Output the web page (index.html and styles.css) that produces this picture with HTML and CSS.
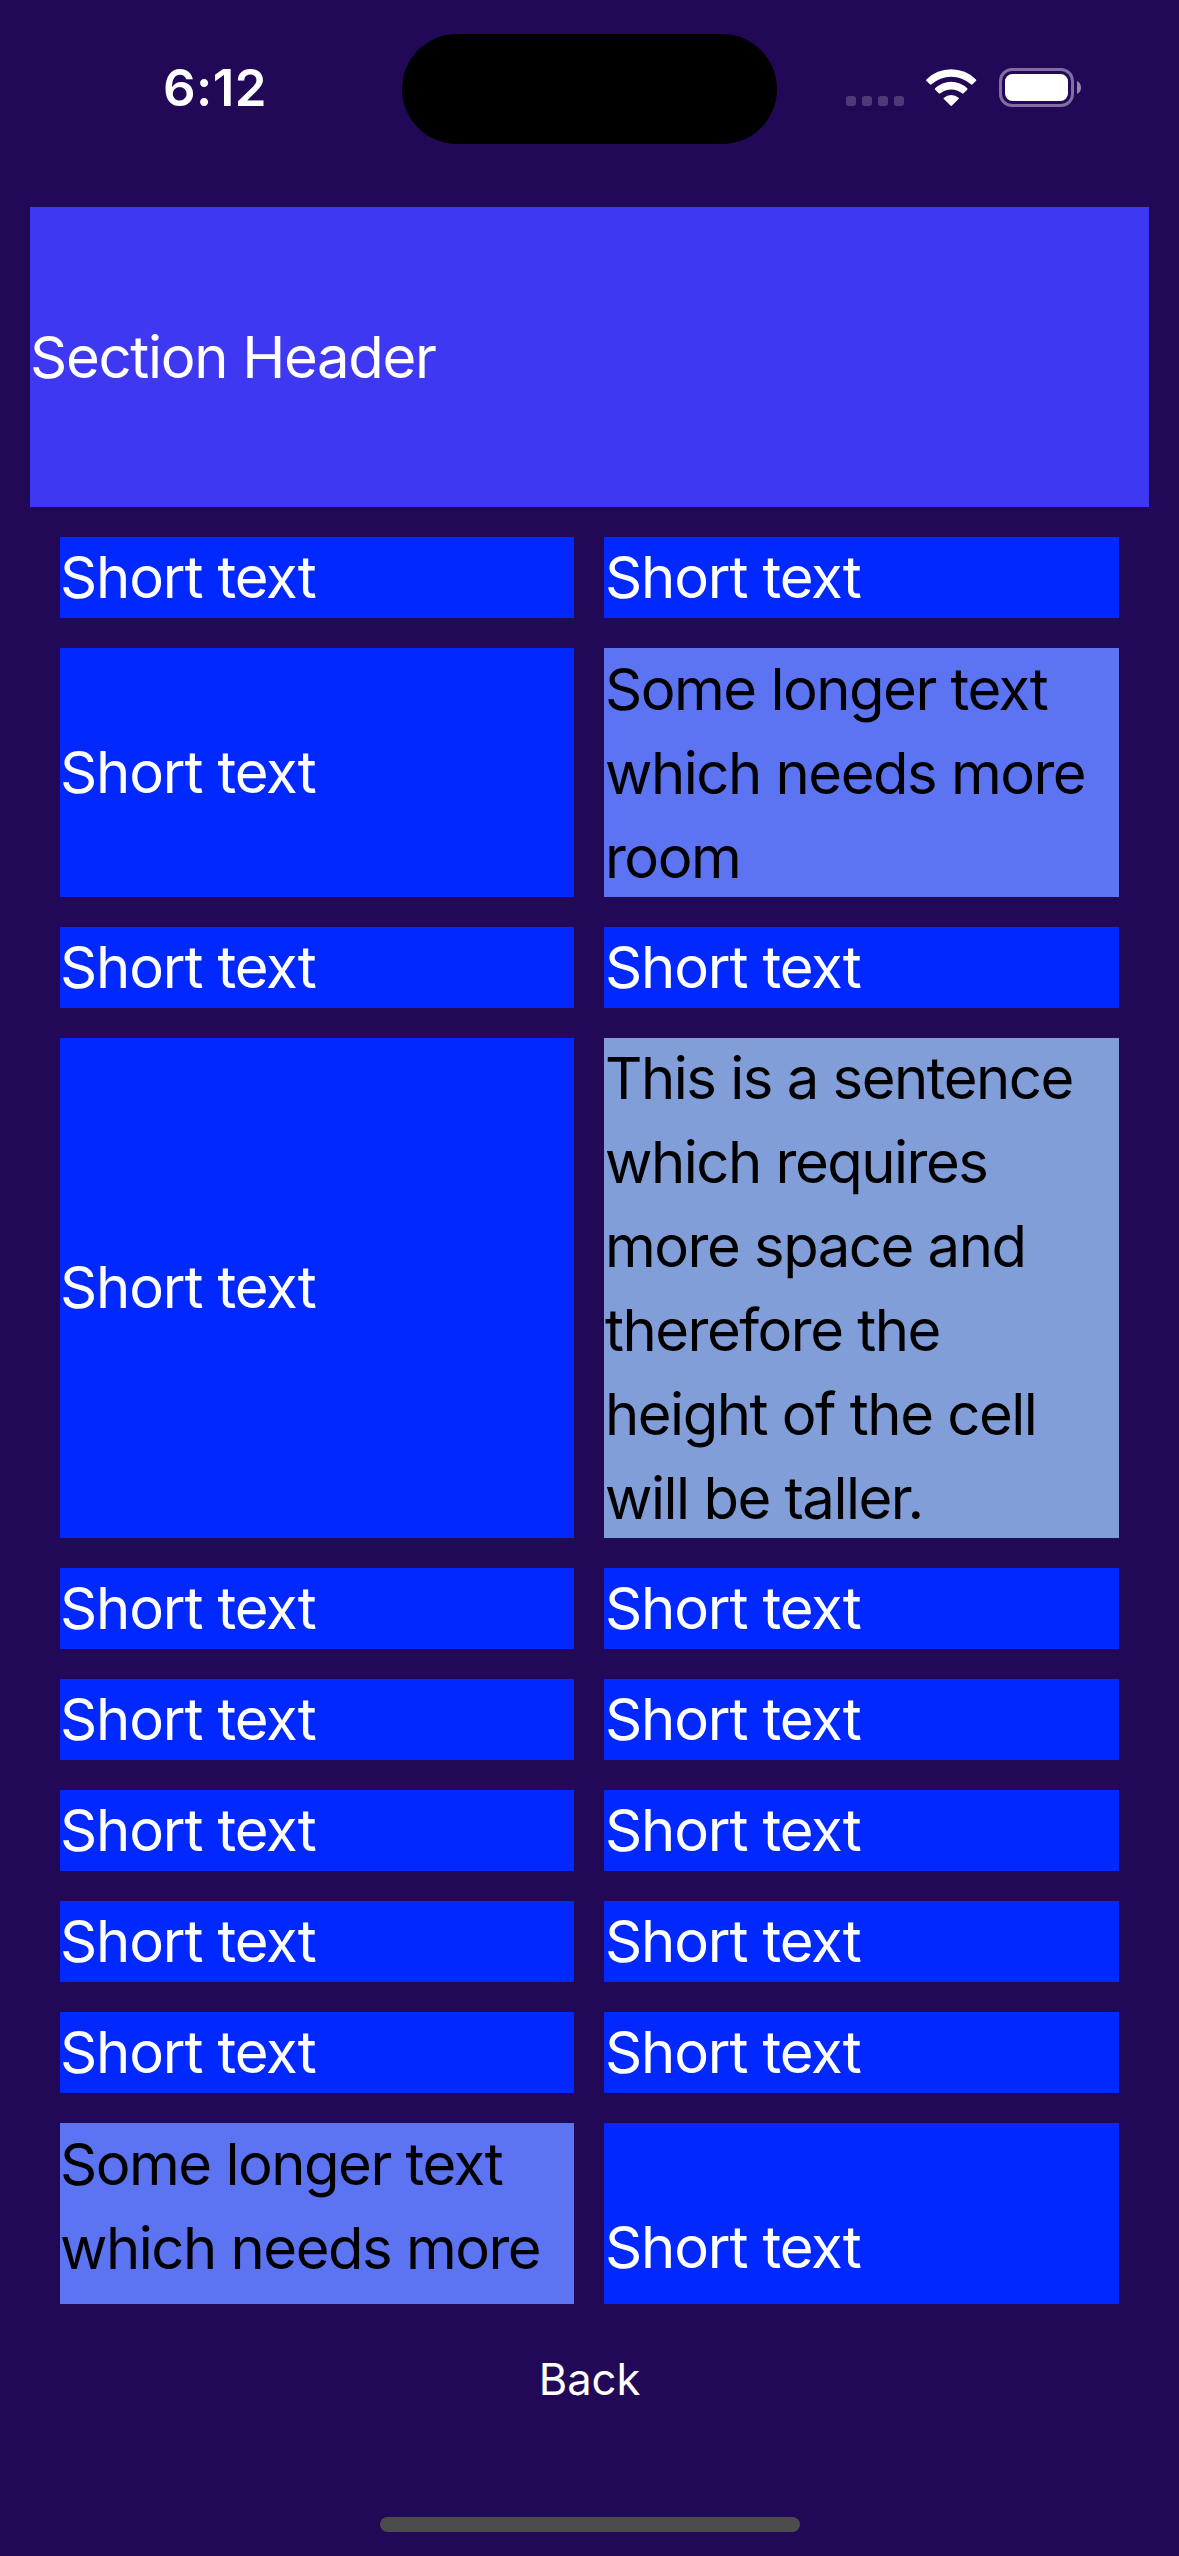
FILE: index.html
```html
<!DOCTYPE html>
<html lang="en">
<head>
<meta charset="utf-8">
<title>Grid</title>
<link rel="stylesheet" href="styles.css">
</head>
<body>
<div class="screen">
  <header class="status">
    <div class="time">6:12</div>
    <div class="island"></div>
    <div class="indicators">
      <svg class="signal" width="58" height="10" viewBox="0 0 58 10"><rect width="10" height="10" rx="3"/><rect x="16" width="10" height="10" rx="3"/><rect x="32" width="10" height="10" rx="3"/><rect x="48" width="10" height="10" rx="3"/></svg>
      <svg class="wifi" width="51" height="37" viewBox="0 0 51 37"><path d="M.5 10.4A35 35 0 0 1 49.9 10.4Q50.7 11.1 49.9 11.9L46.5 15.3Q45.7 16.1 44.9 15.3A29.2 29.2 0 0 0 5.500 15.3Q4.700 16.100 3.900 15.3L.5 11.900Q-.3 11.100 .5 10.400Z"/><path d="M9.200 19.300A22.800 22.800 0 0 1 41.200 19.300Q42 20 41.200 20.800L37.700 24.300Q36.900 25.100 36.100 24.300A17.300 17.300 0 0 0 14.300 24.300Q13.500 25.100 12.700 24.300L9.200 20.800Q8.400 20 9.200 19.300Z"/><path d="M17.900 28.700A11 11 0 0 1 32.500 28.700Q33.200 29.400 32.500 30.100L26 36.600Q25.200 37.300 24.400 36.600L17.900 30.100Q17.200 29.400 17.900 28.700Z"/></svg>
      <svg class="battery" width="82" height="39" viewBox="0 0 82 39"><rect class="battery-shell" x="1.500" y="1.500" width="72" height="36" rx="11.500"/><rect class="battery-level" x="6" y="6" width="63" height="27" rx="7.500"/><path class="battery-cap" d="M78 13Q82 15 82 19.500T78 26Z"/></svg>
    </div>
  </header>
  <main class="list">
    <h1 class="section-header">Section Header</h1>
    <div class="grid">
      <div class="cell">Short text</div><div class="cell">Short text</div>
      <div class="cell">Short text</div><div class="cell medium">Some longer text which needs more room</div>
      <div class="cell">Short text</div><div class="cell">Short text</div>
      <div class="cell">Short text</div><div class="cell long">This is a sentence which requires more space and therefore the height of the cell will be taller.</div>
      <div class="cell">Short text</div><div class="cell">Short text</div>
      <div class="cell">Short text</div><div class="cell">Short text</div>
      <div class="cell">Short text</div><div class="cell">Short text</div>
      <div class="cell">Short text</div><div class="cell">Short text</div>
      <div class="cell">Short text</div><div class="cell">Short text</div>
      <div class="cell medium partial">Some longer text which needs more</div><div class="cell">Short text</div>
    </div>
  </main>
  <footer class="footer">
    <div class="back">Back</div>
    <div class="home"></div>
  </footer>
</div>
</body>
</html>
```
FILE: styles.css
```css
* { box-sizing: border-box; }
body { margin: 0; background: #220957; }
.screen {
  width: 1179px;
  height: 2556px;
  display: flex;
  flex-direction: column;
  overflow: hidden;
  font-family: Inter, "Liberation Sans", sans-serif;
  color: #fff;
}
.status {
  height: 207px;
  padding-top: 34px;
  display: grid;
  grid-template-columns: 402px 375px 402px;
  align-items: start;
}
.time {
  padding-left: 28px;
  text-align: center;
  font-size: 51px;
  line-height: 60px;
  font-weight: 600;
  letter-spacing: 0.5px;
  margin-top: 24px;
}
.island { height: 110px; border-radius: 55px; background: #000; }
.indicators {
  display: flex;
  align-items: flex-end;
  height: 39px;
  margin: 34px 0 0 69px;
}
.indicators svg { display: block; flex: none; fill: #fff; }
.indicators .signal { margin: 0 22px 1px 0; fill: #503977; }
.wifi { margin: 0 22px 1px 0; }
.indicators .battery-shell { fill: none; stroke: #806ea0; stroke-width: 3; }
.indicators .battery-cap { fill: #9587b0; }
.list { height: 2097px; padding: 0 30px; overflow: hidden; flex: none; }
.section-header {
  height: 300px;
  margin: 0;
  padding-bottom: 1px;
  display: flex;
  align-items: center;
  background: #3e38f2;
  font-size: 58px;
  font-weight: 400;
  line-height: 84px;
  letter-spacing: -1.3px;
}
.grid {
  padding: 30px;
  display: grid;
  grid-template-columns: 514px 515px;
  grid-template-rows: 81px 249px 81px 500px repeat(5, 81px) 249px;
  gap: 30px;
}
.cell {
  padding-bottom: 2px;
  display: flex;
  align-items: center;
  background: #0028ff;
  font-size: 58px;
  line-height: 84px;
  letter-spacing: -1.15px;
}
.cell:nth-child(even) { padding-left: 1px; }
.medium, .long { padding-right: 12px; padding-bottom: 0; color: #000; letter-spacing: -1.5px; }
.medium { background: #5c73f2; }
.long { padding-bottom: 1px; background: #829ed9; }
.partial { padding-bottom: 84px; }
.footer {
  flex: 1;
  padding: 45px 0 24px;
  display: flex;
  flex-direction: column;
  align-items: center;
  justify-content: space-between;
}
.back { font-size: 43.5px; line-height: 60px; }
.home { width: 420px; height: 15px; border-radius: 8px; background: #4c4c4c; }
```
